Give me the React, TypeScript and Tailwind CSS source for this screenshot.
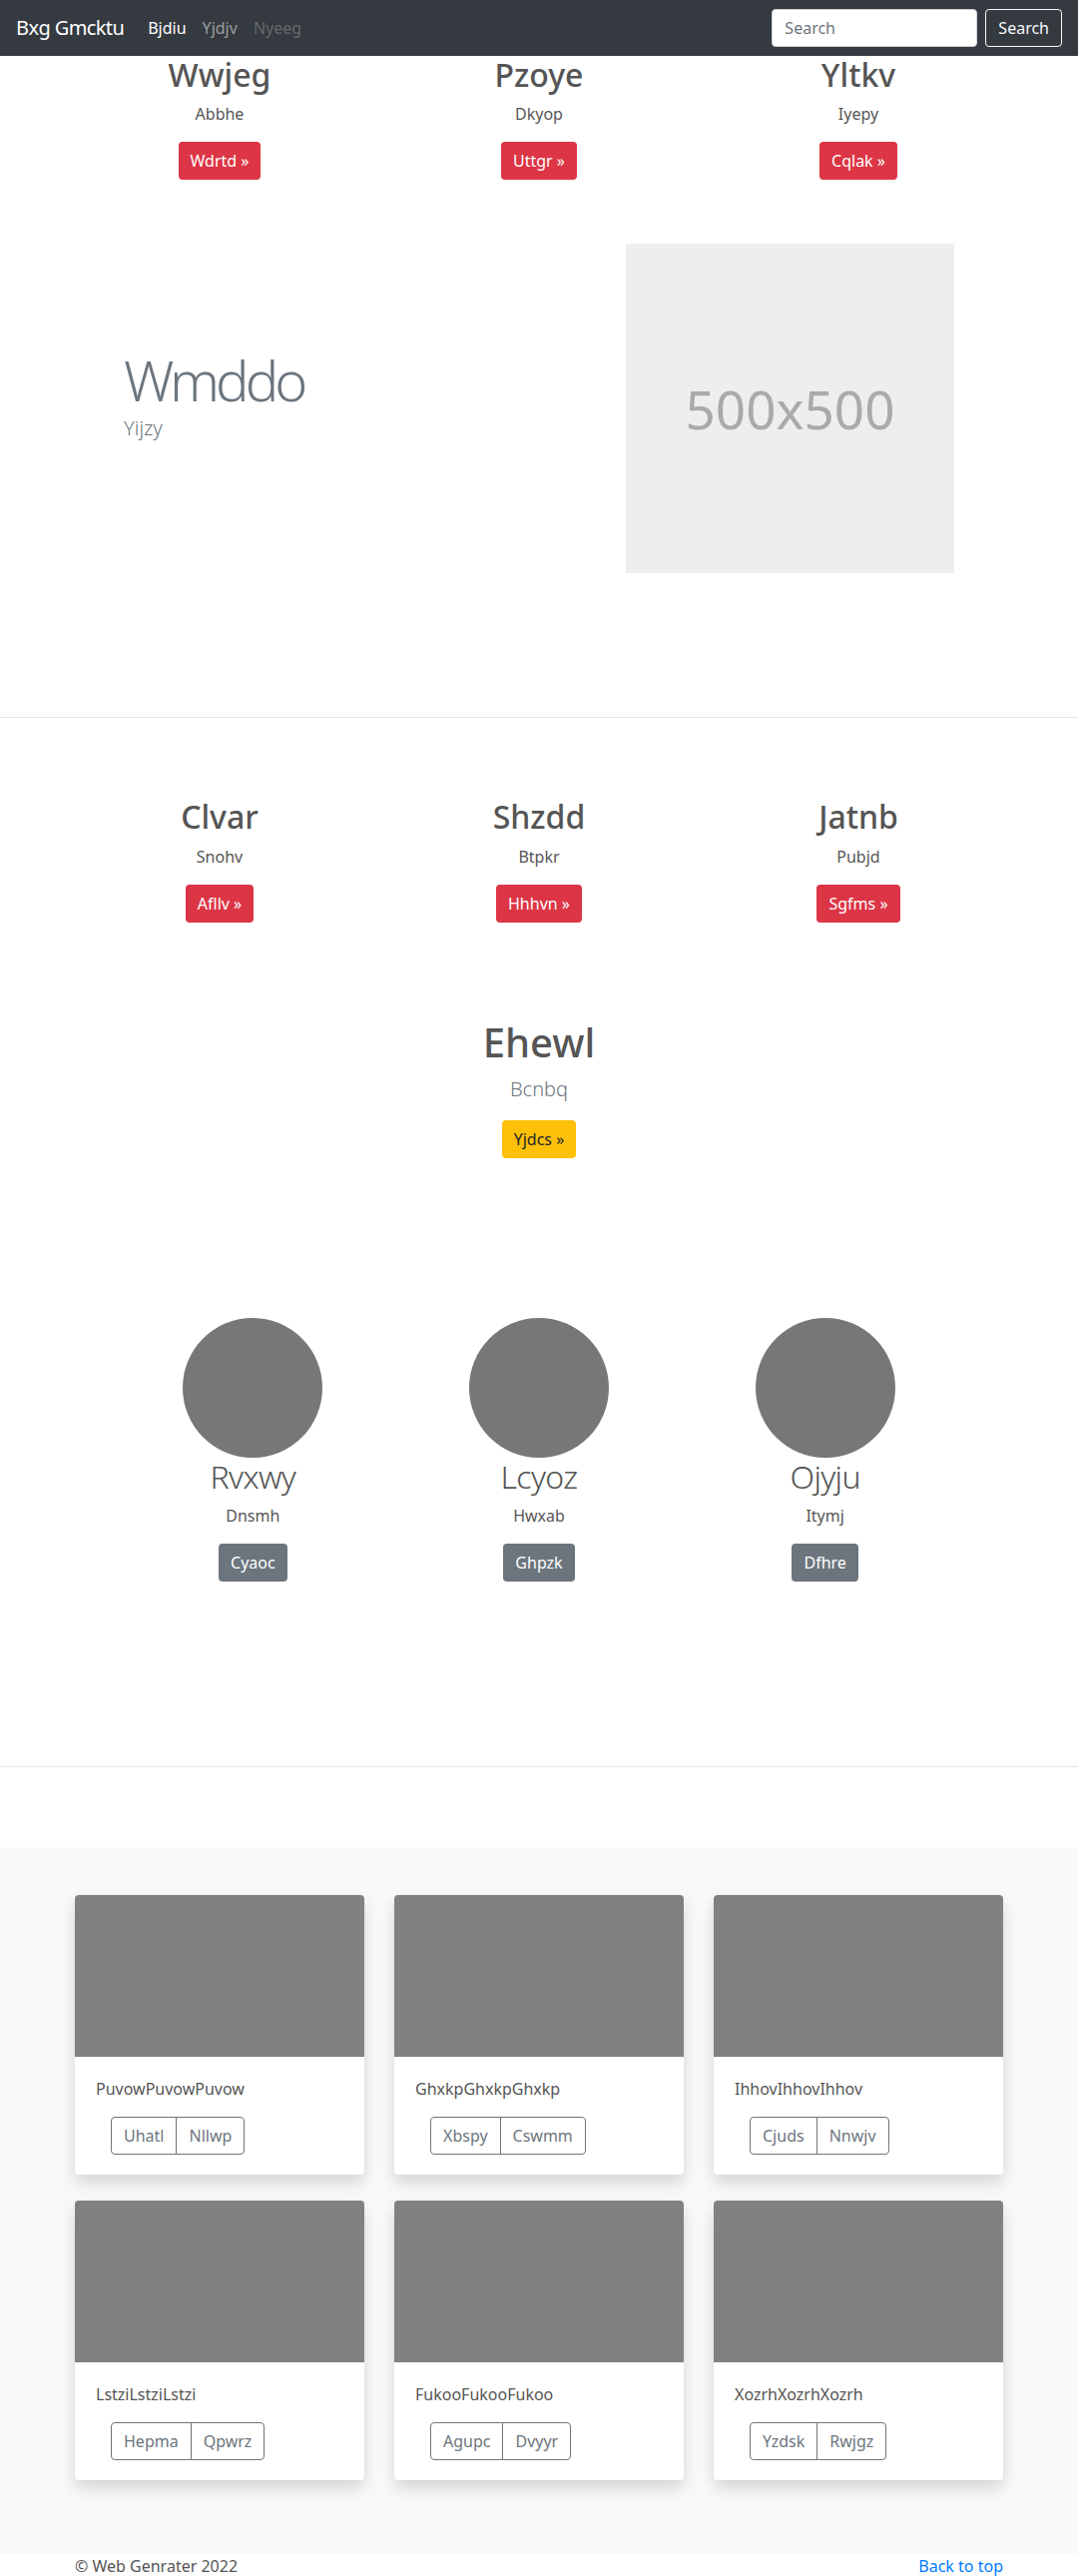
import React from "react";

const topCols = [
  { title: "Wwjeg", text: "Abbhe", btn: "Wdrtd »" },
  { title: "Pzoye", text: "Dkyop", btn: "Uttgr »" },
  { title: "Yltkv", text: "Iyepy", btn: "Cqlak »" },
];

const midCols = [
  { title: "Clvar", text: "Snohv", btn: "Afllv »" },
  { title: "Shzdd", text: "Btpkr", btn: "Hhhvn »" },
  { title: "Jatnb", text: "Pubjd", btn: "Sgfms »" },
];

const people = [
  { name: "Rvxwy", text: "Dnsmh", btn: "Cyaoc" },
  { name: "Lcyoz", text: "Hwxab", btn: "Ghpzk" },
  { name: "Ojyju", text: "Itymj", btn: "Dfhre" },
];

const cards = [
  { text: "PuvowPuvowPuvow", a: "Uhatl", b: "Nllwp" },
  { text: "GhxkpGhxkpGhxkp", a: "Xbspy", b: "Cswmm" },
  { text: "IhhovIhhovIhhov", a: "Cjuds", b: "Nnwjv" },
  { text: "LstziLstziLstzi", a: "Hepma", b: "Qpwrz" },
  { text: "FukooFukooFukoo", a: "Agupc", b: "Dvyyr" },
  { text: "XozrhXozrhXozrh", a: "Yzdsk", b: "Rwjgz" },
];

function Navbar() {
  return (
    <nav className="h-14 bg-[#343a40] flex items-center px-4">
      <span className="text-xl leading-[30px] tracking-[-0.03em] text-white mr-4">Bxg Gmcktu</span>
      <a className="px-2 text-base text-white">Bjdiu</a>
      <a className="px-2 text-base text-white/50">Yjdjv</a>
      <a className="px-2 text-base text-white/25">Nyeeg</a>
      <div className="ml-auto flex items-center">
        <input
          placeholder="Search"
          className="w-[206px] h-[38px] rounded bg-white border border-[#ced4da] px-3 text-base text-[#495057] placeholder:text-[#6c757d] outline-none"
        />
        <button className="ml-2 h-[38px] px-3 rounded border border-[#f8f9fa] text-[#f8f9fa] text-base">
          Search
        </button>
      </div>
    </nav>
  );
}

function ColBlock({ title, text, btn }: { title: string; text: string; btn: string }) {
  return (
    <div className="flex flex-col items-center text-center">
      <h2 className="text-[32px] leading-[38.4px] font-medium text-[#555] mb-2">{title}</h2>
      <p className="text-base leading-6 text-[#555] mb-4">{text}</p>
      <button className="h-[38px] px-3 rounded bg-[#dc3545] text-white text-base leading-6">
        {btn}
      </button>
    </div>
  );
}

export default function App() {
  return (
    <div className="font-['Noto_Sans',sans-serif] bg-white text-[#555]">
      <Navbar />

      <div className="w-[960px] mx-auto grid grid-cols-3">
        {topCols.map((c) => (
          <ColBlock key={c.title} {...c} />
        ))}
      </div>

      <div className="w-[930px] mx-auto mt-16 px-[49px] flex items-center justify-between">
        <div className="flex flex-col pb-[28px]">
          <h2 className="text-[56px] leading-[67.2px] font-light tracking-[-0.07em] text-[#6c757d]">Wmddo</h2>
          <p className="text-xl leading-[30px] font-light text-[#6c757d]">Yijzy</p>
        </div>
        <div className="w-[329px] h-[330px] bg-[#eeeeee] flex items-center justify-center">
          <span className="text-[53px] text-[#aaaaaa]">500x500</span>
        </div>
      </div>

      <hr className="mt-[144px] border-0 border-t border-[#e5e5e5]" />

      <div className="w-[960px] mx-auto grid grid-cols-3 mt-[80px]">
        {midCols.map((c) => (
          <ColBlock key={c.title} {...c} />
        ))}
      </div>

      <div className="flex flex-col items-center text-center mt-[96px]">
        <h1 className="text-[40px] leading-[48px] font-medium text-[#555] mb-2">Ehewl</h1>
        <p className="text-xl leading-[30px] font-light text-[#6c757d] mb-4">Bcnbq</p>
        <button className="h-[38px] px-3 rounded bg-[#ffc107] text-[#212529] text-base leading-6">
          Yjdcs »
        </button>
      </div>

      <div className="w-[860px] mx-auto grid grid-cols-3 mt-[160px]">
        {people.map((p) => (
          <div key={p.name} className="flex flex-col items-center text-center">
            <div className="w-[140px] h-[140px] rounded-full bg-[#777777]" />
            <h2 className="text-[32px] leading-[38.4px] font-light tracking-[-0.02em] text-[#555] mb-2">{p.name}</h2>
            <p className="text-base leading-6 text-[#555] mb-4">{p.text}</p>
            <button className="h-[38px] px-3 rounded bg-[#6c757d] text-white text-base leading-6">
              {p.btn}
            </button>
          </div>
        ))}
      </div>

      <hr className="mt-[185px] border-0 border-t border-[#e5e5e5]" />

      <div className="mt-[80px] bg-[#f8f9fa] pt-12 pb-[74px]">
        <div className="w-[930px] mx-auto grid grid-cols-3 gap-x-[30px] gap-y-[26px]">
          {cards.map((c) => (
            <div
              key={c.text}
              className="bg-white rounded overflow-hidden shadow-[0_8px_16px_rgba(0,0,0,0.15)]"
            >
              <div className="h-[162px] bg-[#818181]" />
              <div className="pt-5 pb-5 pl-[21px] pr-5">
                <p className="text-base leading-6 text-[#555] mb-4">{c.text}</p>
                <div className="ml-[15px] inline-flex">
                  <button className="h-[38px] px-3 rounded-l border border-[#6c757d] text-[#6c757d] text-base leading-6">
                    {c.a}
                  </button>
                  <button className="-ml-px h-[38px] px-3 rounded-r border border-[#6c757d] text-[#6c757d] text-base leading-6">
                    {c.b}
                  </button>
                </div>
              </div>
            </div>
          ))}
        </div>
      </div>

      <footer className="w-[930px] mx-auto flex justify-between text-base leading-6">
        <span className="text-[#555]">© Web Genrater 2022</span>
        <a className="text-[#007bff]">Back to top</a>
      </footer>
    </div>
  );
}
